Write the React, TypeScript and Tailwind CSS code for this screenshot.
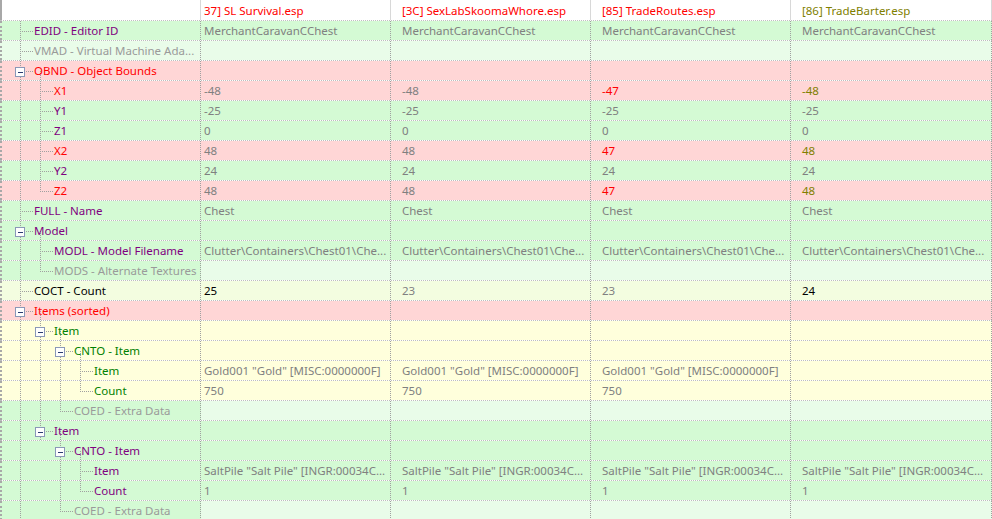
import React from "react";

type Row = {
  name: string;
  level: number;
  box?: boolean;
  last?: boolean;
  nc: string;
  bg: string;
  vbg?: string;
  vals: string[];
  vc?: string[];
};

const G = "#d4fad4", LG = "#e9fce9", R = "#ffd6d6", Y = "#ffffdc", CY = "#f3fde0";
const P = "#800080", GR = "#9a9a9a", RED = "#ff0000", GN = "#008000", OL = "#808000";
const gv = ["#808080", "#808080", "#808080", "#808080"];
const M = "MerchantCaravanCChest";
const CL = "Clutter\\Containers\\Chest01\\Che...";
const GOLD = 'Gold001 "Gold" [MISC:0000000F]';
const SALT = 'SaltPile "Salt Pile" [INGR:00034C...';

const rows: Row[] = [
  { name: "EDID - Editor ID", level: 0, nc: P, bg: G, vals: [M, M, M, M] },
  { name: "VMAD - Virtual Machine Ada...", level: 0, nc: GR, bg: LG, vals: ["", "", "", ""] },
  { name: "OBND - Object Bounds", level: 0, box: true, nc: RED, bg: R, vals: ["", "", "", ""] },
  { name: "X1", level: 1, nc: RED, bg: R, vals: ["-48", "-48", "-47", "-48"], vc: ["#808080", "#808080", RED, OL] },
  { name: "Y1", level: 1, nc: P, bg: G, vals: ["-25", "-25", "-25", "-25"] },
  { name: "Z1", level: 1, nc: P, bg: G, vals: ["0", "0", "0", "0"] },
  { name: "X2", level: 1, nc: RED, bg: R, vals: ["48", "48", "47", "48"], vc: ["#808080", "#808080", RED, OL] },
  { name: "Y2", level: 1, nc: P, bg: G, vals: ["24", "24", "24", "24"] },
  { name: "Z2", level: 1, last: true, nc: RED, bg: R, vals: ["48", "48", "47", "48"], vc: ["#808080", "#808080", RED, OL] },
  { name: "FULL - Name", level: 0, nc: P, bg: G, vals: ["Chest", "Chest", "Chest", "Chest"] },
  { name: "Model", level: 0, box: true, nc: P, bg: G, vals: ["", "", "", ""] },
  { name: "MODL - Model Filename", level: 1, nc: P, bg: G, vals: [CL, CL, CL, CL] },
  { name: "MODS - Alternate Textures", level: 1, last: true, nc: GR, bg: G, vbg: LG, vals: ["", "", "", ""] },
  { name: "COCT - Count", level: 0, nc: "#000000", bg: CY, vals: ["25", "23", "23", "24"], vc: ["#000", "#808080", "#808080", "#000"] },
  { name: "Items (sorted)", level: 0, box: true, nc: RED, bg: R, vals: ["", "", "", ""] },
  { name: "Item", level: 1, box: true, nc: GN, bg: Y, vals: ["", "", "", ""] },
  { name: "CNTO - Item", level: 2, box: true, nc: GN, bg: Y, vals: ["", "", "", ""] },
  { name: "Item", level: 3, nc: GN, bg: Y, vals: [GOLD, GOLD, GOLD, ""] },
  { name: "Count", level: 3, last: true, nc: GN, bg: Y, vals: ["750", "750", "750", ""] },
  { name: "COED - Extra Data", level: 2, last: true, nc: GR, bg: G, vbg: LG, vals: ["", "", "", ""] },
  { name: "Item", level: 1, box: true, nc: P, bg: G, vals: ["", "", "", ""] },
  { name: "CNTO - Item", level: 2, box: true, nc: P, bg: G, vals: ["", "", "", ""] },
  { name: "Item", level: 3, nc: P, bg: G, vals: [SALT, SALT, SALT, SALT] },
  { name: "Count", level: 3, last: true, nc: P, bg: G, vals: ["1", "1", "1", "1"] },
  { name: "COED - Extra Data", level: 2, last: true, nc: GR, bg: G, vbg: LG, vals: ["", "", "", ""] },
];

function verticals(i: number): { x: number; half: boolean }[] {
  const r = rows[i];
  const out: { x: number; half: boolean }[] = [];
  out.push({ x: 18 + 20 * r.level, half: !!r.last });
  for (let l = 0; l < r.level; l++) {
    let cont = l === 0;
    if (!cont) {
      for (let j = i + 1; j < rows.length; j++) {
        if (rows[j].level < l) break;
        if (rows[j].level === l) { cont = true; break; }
      }
    }
    if (cont) out.push({ x: 18 + 20 * l, half: false });
  }
  return out;
}

const dot = "#a0a0a0";

function Tree({ i }: { i: number }) {
  const r = rows[i];
  const vs = verticals(i);
  const cx = 18 + 20 * r.level;
  const hasChild = r.box;
  return (
    <svg width="201" height="20" className="absolute left-0 top-0" shapeRendering="crispEdges">
      {vs.map((v, k) => (
        <line key={k} x1={v.x + 0.5} x2={v.x + 0.5} y1={0} y2={v.half ? 10 : 20} stroke={dot} strokeDasharray="1 1" />
      ))}
      {hasChild && (
        <line x1={cx + 20.5} x2={cx + 20.5} y1={10} y2={20} stroke={dot} strokeDasharray="1 1" />
      )}
      <line x1={cx} x2={cx + 14} y1={10.5} y2={10.5} stroke={dot} strokeDasharray="1 1" />
      {hasChild && (
        <g>
          <rect x={cx - 4.5} y={6.5} width={9} height={9} fill="#fff" stroke="#8a98b8" />
          <line x1={cx - 2} x2={cx + 3} y1={11} y2={11} stroke="#2a3a70" />
        </g>
      )}
    </svg>
  );
}

const widths = [190, 200, 200, 201];

export default function App() {
  return (
    <div className="w-[992px] h-[519px] overflow-hidden bg-white text-[11.5px] leading-[20px] font-['Noto_Sans','Open_Sans',sans-serif]">
      <div className="flex h-[21px] border-b border-dotted border-[#c0c0c0]">
        <div className="w-[201px] shrink-0 border-l-2 border-[#a8a8a8] border-r border-r-[#d8d8d8]" />
        {["37] SL Survival.esp", "[3C] SexLabSkoomaWhore.esp", "[85] TradeRoutes.esp", "[86] TradeBarter.esp"].map((h, k) => (
          <div key={k} className={`shrink-0 border-r border-[#d8d8d8] whitespace-nowrap leading-[21px] ${k === 0 ? "pl-[3px]" : "pl-[11px]"}`} style={{ width: widths[k], color: k === 3 ? OL : RED }}>
            {h}
          </div>
        ))}
      </div>
      {rows.map((r, i) => (
        <div key={i} className="flex h-[20px] border-b border-dotted border-[#bdbdbd]">
          <div className="relative w-[201px] shrink-0 border-l-2 border-[#a8a8a8] border-r border-dotted border-r-[#a0a0a0] whitespace-nowrap" style={{ background: r.bg }}>
            <Tree i={i} />
            <span className="absolute top-0" style={{ left: 32 + 20 * r.level, color: r.nc }}>{r.name}</span>
          </div>
          {r.vals.map((v, k) => (
            <div key={k} className={`shrink-0 border-r border-dotted border-[#a0a0a0] whitespace-nowrap overflow-hidden leading-[20px] ${k === 0 ? "pl-[3px]" : "pl-[11px]"}`} style={{ width: widths[k], background: r.vbg ?? r.bg, color: (r.vc ?? gv)[k] }}>
              {v}
            </div>
          ))}
        </div>
      ))}
    </div>
  );
}
